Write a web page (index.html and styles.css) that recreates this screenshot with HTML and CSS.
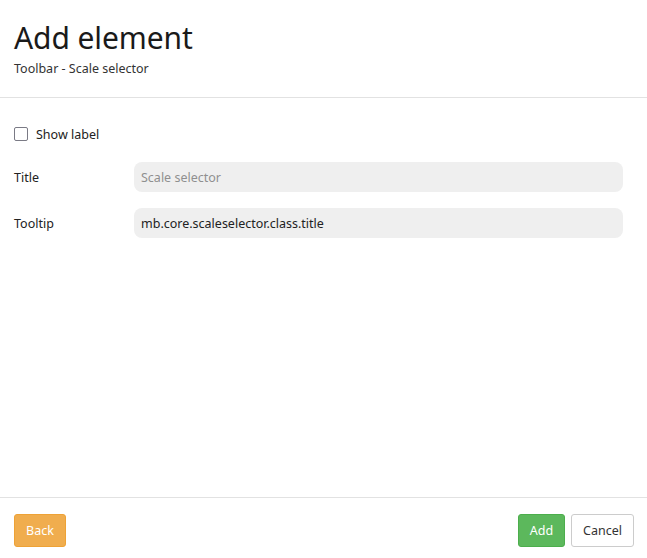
FILE: index.html
```html
<!DOCTYPE html>
<html>
<head>
<meta charset="utf-8">
<link rel="stylesheet" href="styles.css">
</head>
<body>
<div class="modal">
  <header class="head">
    <h1 class="title">Add element</h1>
    <div class="subtitle">Toolbar - Scale selector</div>
  </header>
  <main class="body">
    <label class="check-row"><span class="checkbox"></span><span>Show label</span></label>
    <div class="field">
      <label class="label">Title</label>
      <div class="input placeholder">Scale selector</div>
    </div>
    <div class="field">
      <label class="label">Tooltip</label>
      <div class="input">mb.core.scaleselector.class.title</div>
    </div>
  </main>
  <footer class="foot">
    <button class="btn btn-back">Back</button>
    <div class="right">
      <button class="btn btn-add">Add</button>
      <button class="btn btn-cancel">Cancel</button>
    </div>
  </footer>
</div>
</body>
</html>
```
FILE: styles.css
```css
* { box-sizing: border-box; }
html, body { margin: 0; padding: 0; background: #fff; }
body { font-family: "Noto Sans", "Open Sans", sans-serif; color: #222; width: 647px; height: 558px; }
.modal { display: flex; flex-direction: column; height: 558px; }
.head { padding: 18px 14px 0; height: 98px; border-bottom: 1px solid #e2e2e2; }
.title { margin: 0; font-weight: 400; font-size: 30px; line-height: 40px; color: #1a1a1a; letter-spacing: -0.1px; }
.subtitle { margin-top: 3px; font-size: 12.5px; line-height: 16px; color: #333; }
.body { flex: 1; padding: 28px 24px 0 14px; }
.check-row { display: flex; align-items: center; gap: 8px; font-size: 12.5px; height: 16px; }
.checkbox { width: 14px; height: 14px; border: 1.5px solid #7a7a85; border-radius: 2px; display: inline-block; }
.field { display: flex; align-items: center; margin-top: 20px; height: 30px; }
.field + .field { margin-top: 16px; }
.label { width: 120px; font-size: 12.5px; color: #222; }
.input { flex: 1; height: 30px; background: #efefef; border-radius: 8px; padding: 0 7px; display: flex; align-items: center; font-size: 12.5px; color: #222; }
.input.placeholder { color: #8f8f8f; }
.foot { height: 61px; border-top: 1px solid #e2e2e2; display: flex; justify-content: space-between; align-items: flex-start; padding: 16px 13px 0 14px; }
.right { display: flex; gap: 6px; }
.btn { font-family: inherit; font-size: 12.5px; height: 33px; border-radius: 3px; padding: 0 10px; border: 1px solid transparent; cursor: pointer; }
.btn-back { background: #f0ad4e; border-color: #eea236; color: #fff; width: 52px; }
.btn-add { background: #5cb85c; border-color: #4cae4c; color: #fff; width: 47px; }
.btn-cancel { background: #fff; border-color: #ccc; color: #333; width: 63px; }
```
